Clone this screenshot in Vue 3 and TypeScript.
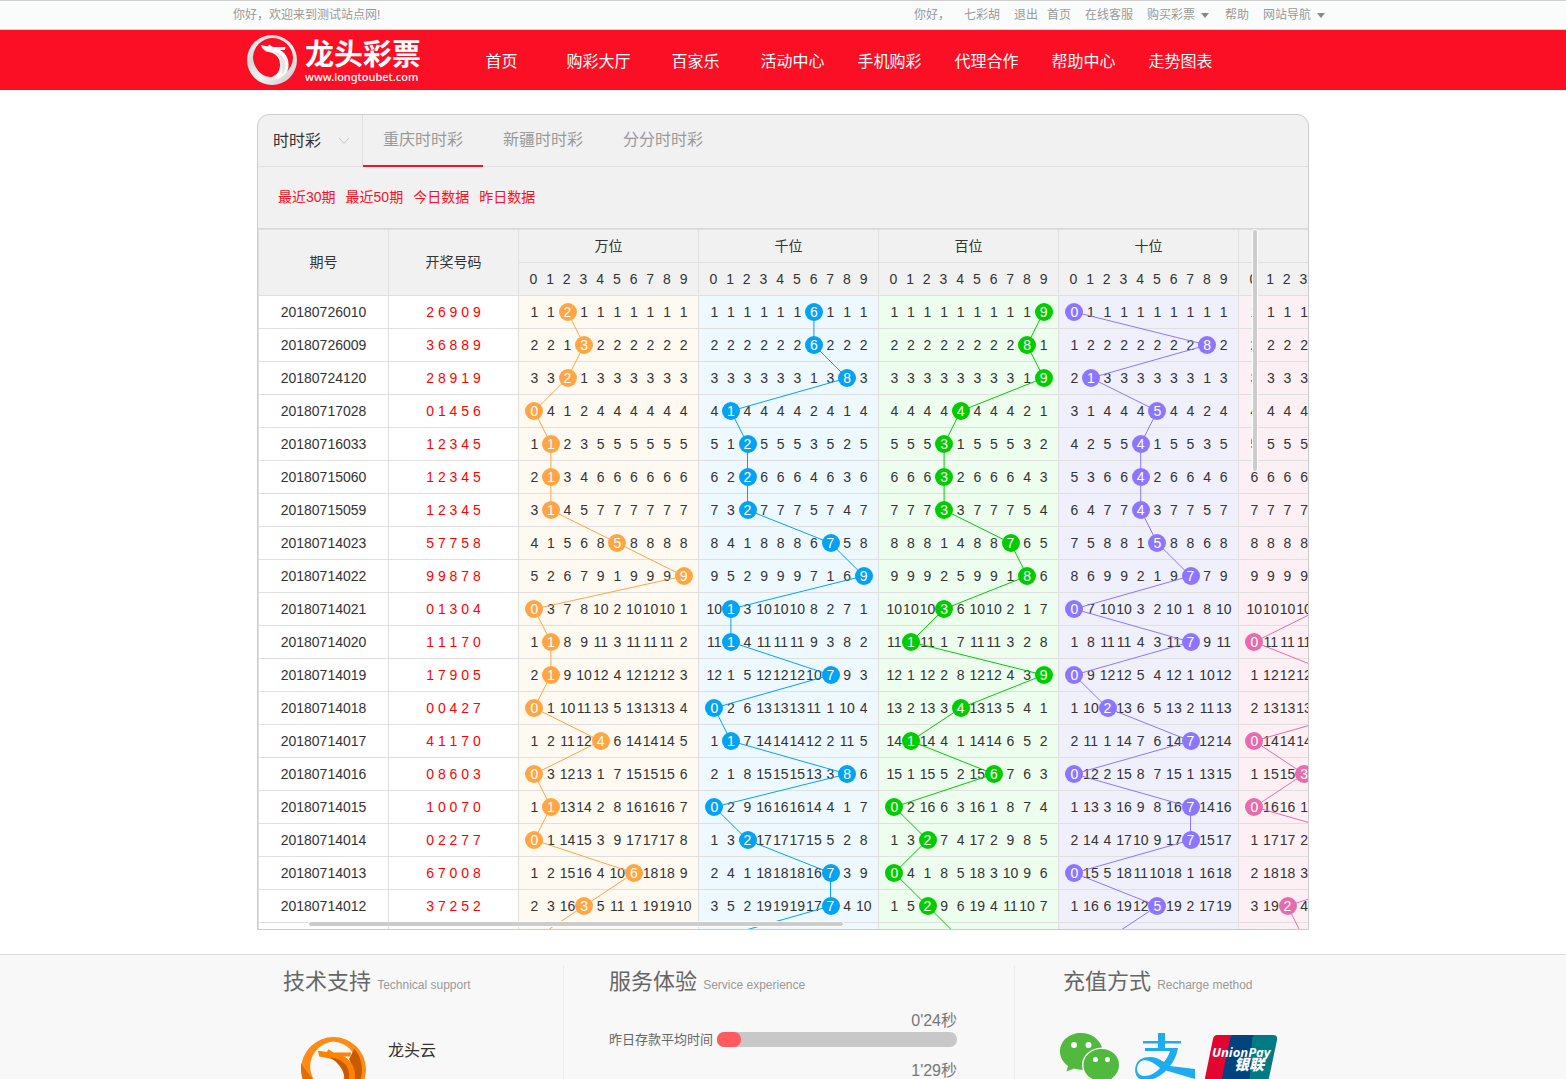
<script setup lang="ts">
import { computed, ref } from 'vue'

interface Draw {
  issue: string
  numbers: string
}

interface Cell {
  hit: boolean
  value: number
}

interface Place {
  name: string
  key: string
  color: string
}

const navItems: string[] = ['首页', '购彩大厅', '百家乐', '活动中心', '手机购彩', '代理合作', '帮助中心', '走势图表']
const tabs: string[] = ['重庆时时彩', '新疆时时彩', '分分时时彩']
const filters: string[] = ['最近30期', '最近50期', '今日数据', '昨日数据']
const activeTab = ref(0)
const lottery = ref('时时彩')

const digits: number[] = [0, 1, 2, 3, 4, 5, 6, 7, 8, 9]

const places: Place[] = [
  { name: '万位', key: 'wan', color: '#ffa544' },
  { name: '千位', key: 'qian', color: '#03a2f2' },
  { name: '百位', key: 'bai', color: '#00cc00' },
  { name: '十位', key: 'shi', color: '#8d76ff' },
  { name: '个位', key: 'ge', color: '#e66cae' },
]

const draws: Draw[] = [
  { issue: '20180726010', numbers: '26909' },
  { issue: '20180726009', numbers: '36889' },
  { issue: '20180724120', numbers: '28919' },
  { issue: '20180717028', numbers: '01456' },
  { issue: '20180716033', numbers: '12345' },
  { issue: '20180715060', numbers: '12345' },
  { issue: '20180715059', numbers: '12345' },
  { issue: '20180714023', numbers: '57758' },
  { issue: '20180714022', numbers: '99878' },
  { issue: '20180714021', numbers: '01304' },
  { issue: '20180714020', numbers: '11170' },
  { issue: '20180714019', numbers: '17905' },
  { issue: '20180714018', numbers: '00427' },
  { issue: '20180714017', numbers: '41170' },
  { issue: '20180714016', numbers: '08603' },
  { issue: '20180714015', numbers: '10070' },
  { issue: '20180714014', numbers: '02277' },
  { issue: '20180714013', numbers: '67008' },
  { issue: '20180714012', numbers: '37252' },
  { issue: '20180714011', numbers: '00423' },
]

// For every place, count the draws since each digit last came up.
const rows = computed(() => {
  const misses: number[][] = places.map(() => digits.map(() => 0))
  return draws.map((draw) => ({
    ...draw,
    spaced: draw.numbers.split('').join(' '),
    groups: places.map((_, p): Cell[] =>
      digits.map((d) => {
        const hit = Number(draw.numbers[p]) === d
        misses[p][d] = hit ? 0 : misses[p][d] + 1
        return { hit, value: hit ? d : misses[p][d] }
      }),
    ),
  }))
})

const ROW = 33
const GROUP = 180
const STEP = 16.6

const trendLines = computed(() =>
  places.map((place, p) => ({
    color: place.color,
    points: draws
      .map((draw, r) => {
        const x = 268 + p * GROUP + (Number(draw.numbers[p]) + 0.5) * STEP
        return `${x.toFixed(1)},${83 + r * ROW}`
      })
      .join(' '),
  })),
)

const speeds = [
  { label: '昨日存款平均时间', time: "0'24秒", percent: 10 },
  { label: '昨日取款平均时间', time: "1'29秒", percent: 30 },
]
</script>

<template>
  <div class="page">
    <div class="topbar">
      <div class="wrap topbar-inner">
        <span>你好，欢迎来到测试站点网!</span>
        <div class="top-links">
          <div class="top-group">
            <span>你好，</span>
            <a href="#">七彩胡</a>
            <a href="#">退出</a>
          </div>
          <div class="top-group">
            <a href="#">首页</a>
            <a href="#">在线客服</a>
            <a href="#" class="has-caret">购买彩票</a>
            <a href="#">帮助</a>
            <a href="#" class="has-caret">网站导航</a>
          </div>
        </div>
      </div>
    </div>

    <header class="header">
      <div class="wrap header-inner">
        <a href="#" class="brand">
          <svg class="brand-mark" viewBox="0 0 50 50" aria-hidden="true">
            <defs>
              <linearGradient id="silver" x1="0" y1="0" x2="1" y2="1">
                <stop offset="0" stop-color="#ffffff" />
                <stop offset="0.3" stop-color="#d8d8d8" />
                <stop offset="0.55" stop-color="#f4f4f4" />
                <stop offset="1" stop-color="#c4c4c4" />
              </linearGradient>
            </defs>
            <path fill="url(#silver)" fill-rule="evenodd" d="M25 0a25 25 0 1 1 0 50a25 25 0 1 1 0-50zM25 3A20 20 0 0 0 6 22C6 32 14 42 24 42C36 43 46 34 46 22A21 20 0 0 0 25 3z" />
            <path fill="#fff" d="M14 10l7 1.500l1-2l4 2.500h12.500l-.5 3h-5c7 4 9 10 8.500 17C41 37 37 41 31 44l-7-1.500c7-3 9-7 9-13C33 21 27 17.500 19 16.500L15 13z" />
            <path fill="#e4e4e4" d="M26 16c8 2 13 8 12.500 15c0 4-2 7-4 9c1-8 1-17-8.500-24z" />
          </svg>
          <span class="brand-text">
            <strong>龙头彩票</strong>
            <span>www.longtoubet.com</span>
          </span>
        </a>
        <nav class="nav">
          <a v-for="item in navItems" :key="item" href="#">{{ item }}</a>
        </nav>
      </div>
    </header>

    <main class="panel">
      <div class="tabs">
        <label class="picker">
          <select v-model="lottery" aria-label="彩种">
            <option>时时彩</option>
          </select>
          <svg class="chevron" viewBox="0 0 12 8" aria-hidden="true"><path d="M1 1l5 5.500L11 1" fill="none" stroke="#c4c4c4" /></svg>
        </label>
        <button
          v-for="(tab, i) in tabs"
          :key="tab"
          type="button"
          class="tab"
          :class="{ active: i === activeTab }"
          @click="activeTab = i"
        >{{ tab }}</button>
      </div>

      <div class="filters">
        <a v-for="filter in filters" :key="filter" href="#">{{ filter }}</a>
      </div>

      <div class="scroller">
        <table>
          <colgroup>
            <col class="col-info" />
            <col class="col-info" />
            <col v-for="place in places" :key="place.key" class="col-place" />
          </colgroup>
          <thead>
            <tr>
              <th rowspan="2">期号</th>
              <th rowspan="2">开奖号码</th>
              <th v-for="place in places" :key="place.key">{{ place.name }}</th>
            </tr>
            <tr>
              <th v-for="place in places" :key="place.key">
                <div class="digits head">
                  <span v-for="d in digits" :key="d">{{ d }}</span>
                </div>
              </th>
            </tr>
          </thead>
          <tbody>
            <tr v-for="row in rows" :key="row.issue">
              <td>{{ row.issue }}</td>
              <td class="numbers">{{ row.spaced }}</td>
              <td v-for="(cells, p) in row.groups" :key="places[p].key" :class="places[p].key">
                <div class="digits">
                  <span v-for="(cell, d) in cells" :key="d" :class="{ ball: cell.hit }">{{ cell.value }}</span>
                </div>
              </td>
            </tr>
          </tbody>
        </table>
        <svg class="lines" aria-hidden="true">
          <polyline v-for="line in trendLines" :key="line.color" :points="line.points" :stroke="line.color" fill="none" />
        </svg>
        <div class="bar-y"></div>
        <div class="bar-x"></div>
      </div>
    </main>

    <footer class="footer">
      <div class="footer-inner">
        <section class="support">
          <h2>技术支持 <small>Technical support</small></h2>
          <div class="support-item">
            <svg class="cloud-mark" viewBox="0 0 50 50" aria-hidden="true">
              <path fill="#ff8a14" fill-rule="evenodd" d="M25 0a25 25 0 1 1 0 50a25 25 0 1 1 0-50zM25 3.500A19 20 0 0 0 7 22C7 32 14 42 24 42C36 43 43 34 43 22A19 19 0 0 0 25 3.500z" />
              <path fill="#e06c0b" d="M0 20c3 5 6 9 9 12c3 8 9 13 17 18C10 50-1 37 0 20z" />
              <path fill="#c95a00" d="M41 9c8 9 8 24-1 34c2-9 1-18-3-26z" />
              <path fill="#ff8200" d="M13 10.500l7 1l1-2l4 2.500h13.500l-.5 3h-5c7 4 9 10 8.500 17C41 37 37 41 31 44l-7-1.500c7-3 9-7 9-13C33 21 27 17 19 16l-5-1z" />
              <path fill="#c95a00" d="M22 15.500c10 1 16 7 15 15.500c0 4-2 7-4 9c2-9 0-18-11-24.500z" />
            </svg>
            <a href="#">龙头云</a>
          </div>
        </section>
        <section class="service">
          <h2>服务体验 <small>Service experience</small></h2>
          <div class="speeds">
            <div v-for="speed in speeds" :key="speed.label" class="speed">
              <div class="speed-time">{{ speed.time }}</div>
              <div class="speed-row">
                <span>{{ speed.label }}</span>
                <div class="track"><div class="fill" :style="{ width: speed.percent + '%' }"></div></div>
              </div>
            </div>
          </div>
        </section>
        <section class="recharge">
          <h2>充值方式 <small>Recharge method</small></h2>
          <div class="pay">
            <svg class="wechat" viewBox="0 0 60 52" aria-label="微信支付">
              <path fill="#51b93d" d="M21 0C9 0 0 8 0 18.500C0 24.500 3 29 8 33L6.500 38.500L14 35.500C17 36.400 20 36.900 23 36.800C19 25 29 15 42 14.500C39.500 6 31 0 21 0z" />
              <path fill="#51b93d" d="M41.500 16C31 16 23.500 23 23.500 32C23.500 41 31 48 41.500 48L47 47L53 50.500L51.500 45.500C56 42.500 59 37.500 59 32C59 23 52 16 41.500 16z" />
              <g fill="#fff"><circle cx="14" cy="12" r="3" /><circle cx="28.500" cy="12" r="3" /><circle cx="35.500" cy="26.500" r="2.500" /><circle cx="47.500" cy="26.500" r="2.500" /></g>
            </svg>
            <svg class="alipay" viewBox="0 0 60 52" aria-label="支付宝">
              <path fill="#1fabf0" fill-rule="evenodd" d="M23 0h7v8h16v2.500H30V15h13c-1 7-4 13-8 18l25 3v10L31 37.500C23 46 12 49 5 46C-2 42-1 31 5 26.500C13 22 22 24 29 29c3-4 5-7 6-11H10v-3h13v-4.500H8V8h15zM25 35C17 28 10 25 5 29C1 33 1 39 5 42C11 45 20 41 25 35z" />
            </svg>
            <svg class="union" viewBox="0 0 72 48" aria-label="银联">
              <path fill="#e10530" d="M12 0h20L22 48H4q-5 0-4-5L8 4q1-4 4-4z" />
              <path fill="#01427f" d="M28 0h26L44 48H20q-4 0-3-5L25 4q1-4 3-4z" />
              <path fill="#007b84" d="M50 0h18q5 0 4 5l-8 38q-1 5-5 5H42q2-2 3-6L47 4q1-4 3-4z" />
              <text x="7" y="22" class="union-en">UnionPay</text>
              <text x="29" y="35" class="union-cn">银联</text>
            </svg>
          </div>
        </section>
      </div>
    </footer>
  </div>
</template>

<style>
body {
  margin: 0;
  background: #fff;
}
</style>

<style scoped>
.page {
  height: 100vh;
  overflow: hidden;
  font-family: "Liberation Sans", "Noto Sans CJK SC", sans-serif;
  font-size: 14px;
  color: #333;
}

a {
  color: inherit;
  text-decoration: none;
}

.wrap {
  max-width: 1100px;
  margin: 0 auto;
}

.topbar {
  border-top: 1px solid #d0d0d0;
  border-bottom: 1px solid #dcd6d6;
  background: #fafcfc;
  color: #999;
  font-size: 12px;
  line-height: 28px;
}

.topbar-inner {
  display: flex;
  justify-content: space-between;
}

.top-links {
  display: flex;
  gap: 9px;
  padding-right: 6px;
}

.top-group {
  display: flex;
  gap: 14px;
}

.has-caret {
  display: flex;
  align-items: center;
  gap: 6px;
  padding-right: 2px;
}

.has-caret::after {
  content: "";
  border: 4px solid transparent;
  border-top: 5px solid #888;
  border-bottom: 0;
}

.header {
  background: #fa0f24;
}

.header-inner {
  display: flex;
  height: 60px;
}

.brand {
  display: flex;
  align-items: center;
  gap: 8px;
  width: 206px;
  padding-left: 14px;
  color: #fff;
}

.brand-mark {
  width: 50px;
  height: 50px;
}

.brand-text {
  display: flex;
  flex-direction: column;
  padding-top: 3px;
}

.brand-text strong {
  font-size: 29px;
  line-height: 31px;
  font-weight: 700;
}

.brand-text span {
  font-family: "Noto Sans", sans-serif;
  font-size: 11px;
  font-weight: 500;
  line-height: 12px;
}

.nav {
  display: flex;
}

.nav a {
  width: 97px;
  color: #fff;
  font-size: 16px;
  line-height: 64px;
  text-align: center;
}

.panel {
  box-sizing: border-box;
  max-width: 1052px;
  margin: 24px auto;
  overflow: hidden;
  border: 1px solid #ccc;
  border-radius: 12px 12px 0 0;
  background: #f1f1f1;
}

.tabs {
  display: flex;
  height: 51px;
  border-bottom: 1px solid #dfdfdf;
}

.picker {
  position: relative;
  width: 104px;
  border-right: 1px solid #dfdfdf;
}

.picker select {
  width: 100%;
  height: 100%;
  padding: 0 15px;
  border: 0;
  appearance: none;
  background: transparent;
  color: #333;
  font: inherit;
  font-size: 16px;
}

.chevron {
  position: absolute;
  top: 22px;
  right: 12px;
  width: 12px;
  height: 8px;
}

.tab {
  height: 52px;
  padding: 0 20px 4px;
  border: 0;
  border-bottom: 2px solid transparent;
  background: none;
  color: #999;
  font: inherit;
  font-size: 16px;
}

.tab.active {
  border-bottom-color: #fa0f24;
}

.filters {
  display: flex;
  gap: 10px;
  padding: 0 20px;
  border-bottom: 1px solid #d8d8d8;
  color: #fa0f24;
  line-height: 61px;
}

.scroller {
  position: relative;
  height: 700px;
  overflow: hidden;
}

table {
  width: 1161px;
  table-layout: fixed;
  border-spacing: 0;
  border-top: 1px solid #dfdfdf;
  border-left: 1px solid #dfdfdf;
}

.col-info {
  width: 130px;
}

.col-place {
  width: 180px;
}

th,
td {
  box-sizing: border-box;
  height: 33px;
  padding: 0;
  border-right: 1px solid #dfdfdf;
  border-bottom: 1px solid #dfdfdf;
  font-weight: 400;
  line-height: 32px;
  text-align: center;
}

th[rowspan] {
  padding-bottom: 2px;
}

td {
  background: #fff;
}

.numbers {
  color: #f00;
}

.digits {
  display: grid;
  grid-template-columns: repeat(10, minmax(0, 1fr));
  justify-items: center;
  align-items: center;
  height: 32px;
  padding: 0 6px 0 7px;
}

.digits.head {
  padding: 0 6px;
}

.ball {
  position: relative;
  z-index: 2;
  width: 18px;
  height: 18px;
  border-radius: 9px;
  color: #fff;
  line-height: 18px;
}

td.wan { background: #fefaf2; }
td.qian { background: #eef9ff; }
td.bai { background: #edfeee; }
td.shi { background: #f0effc; }
td.ge { background: #fdf0f4; }

.wan .ball { background: #ffa544; }
.qian .ball { background: #03a2f2; }
.bai .ball { background: #00cc00; }
.shi .ball { background: #8d76ff; }
.ge .ball { background: #e66cae; }

.lines {
  position: absolute;
  top: 0;
  left: 0;
  z-index: 1;
  width: 1161px;
  height: 728px;
  pointer-events: none;
}

.bar-y,
.bar-x {
  position: absolute;
  z-index: 3;
  border: 1px solid #fff;
  border-radius: 4px;
  background: #ccc;
}

.bar-y {
  top: 0;
  right: 50px;
  width: 4px;
  height: 241px;
}

.bar-x {
  bottom: 2px;
  left: 50px;
  width: 534px;
  height: 4px;
}

.footer {
  border-top: 1px solid #dcdcdc;
  background: #f8f8f8;
}

.footer-inner {
  display: flex;
  max-width: 1000px;
  margin: 0 auto;
  padding-top: 10px;
}

.footer section {
  box-sizing: border-box;
  height: 220px;
}

.support {
  width: 281px;
  border-right: 1px solid #ececec;
}

.service {
  width: 451px;
  padding: 0 57px 0 45px;
  border-right: 1px solid #ececec;
}

.recharge {
  padding-left: 48px;
}

h2 {
  margin: 0;
  color: #666;
  font-size: 22px;
  font-weight: 400;
  line-height: 34px;
  white-space: nowrap;
}

h2 small {
  color: #999;
  font-size: 12px;
}

.support-item {
  display: flex;
  align-items: flex-start;
  gap: 22px;
  padding: 35px 0 0 18px;
  font-size: 16px;
  line-height: 28px;
}

.cloud-mark {
  width: 65px;
  height: 65px;
}

.speeds {
  padding-top: 7px;
}

.speed {
  height: 50px;
}

.speed-time {
  color: #777;
  font-size: 16px;
  line-height: 23px;
  text-align: right;
}

.speed-row {
  display: flex;
  align-items: center;
  gap: 4px;
  color: #666;
  font-size: 13px;
  line-height: 15px;
}

.track {
  flex: 1;
  height: 15px;
  border-radius: 7px;
  background: #c8c8c8;
}

.fill {
  height: 15px;
  border-radius: 7px;
  background: #ff5a5f;
}

.pay {
  display: flex;
  align-items: flex-start;
  gap: 15px;
  margin-left: -3px;
  padding-top: 31px;
}

.wechat,
.alipay {
  width: 60px;
  height: 52px;
}

.union {
  width: 72px;
  height: 48px;
  margin: 2px 0 0 -5px;
}

.union-en {
  fill: #fff;
  font: italic 700 13px "Open Sans", sans-serif;
}

.union-cn {
  fill: #fff;
  font: italic 900 15px "Noto Sans CJK SC", sans-serif;
}
</style>
